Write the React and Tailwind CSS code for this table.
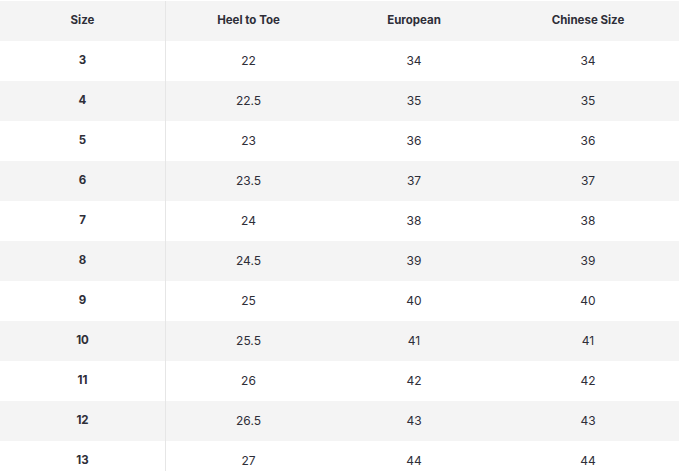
const rows = [
  ["3", "22", "34", "34"],
  ["4", "22.5", "35", "35"],
  ["5", "23", "36", "36"],
  ["6", "23.5", "37", "37"],
  ["7", "24", "38", "38"],
  ["8", "24.5", "39", "39"],
  ["9", "25", "40", "40"],
  ["10", "25.5", "41", "41"],
  ["11", "26", "42", "42"],
  ["12", "26.5", "43", "43"],
  ["13", "27", "44", "44"],
];

function Row({ cells, gray, header }) {
  return (
    <div
      className={`grid grid-cols-[166px_165px_166px_182px] h-[40px] ${gray ? "bg-[#f4f4f4]" : "bg-white"}`}
    >
      {cells.map((c, i) => (
        <div
          key={i}
          className={`flex items-center justify-center pb-[1px] ${i === 0 ? "border-r border-[#e6e6e6]" : ""} ${
            header ? "font-bold text-[11.5px]" : i === 0 ? "font-bold text-[11.5px]" : "text-[12px]"
          }`}
        >
          {c}
        </div>
      ))}
    </div>
  );
}

export default function App() {
  return (
    <div
      className="w-[681px] h-[471px] overflow-hidden bg-white pt-[1px] text-[#2e2e38]"
      style={{ fontFamily: "Inter, 'Noto Sans', sans-serif" }}
    >
      <div className="w-[679px]">
        <Row cells={["Size", "Heel to Toe", "European", "Chinese Size"]} gray header />
        {rows.map((r, i) => (
          <Row key={i} cells={r} gray={i % 2 === 1} />
        ))}
      </div>
    </div>
  );
}
